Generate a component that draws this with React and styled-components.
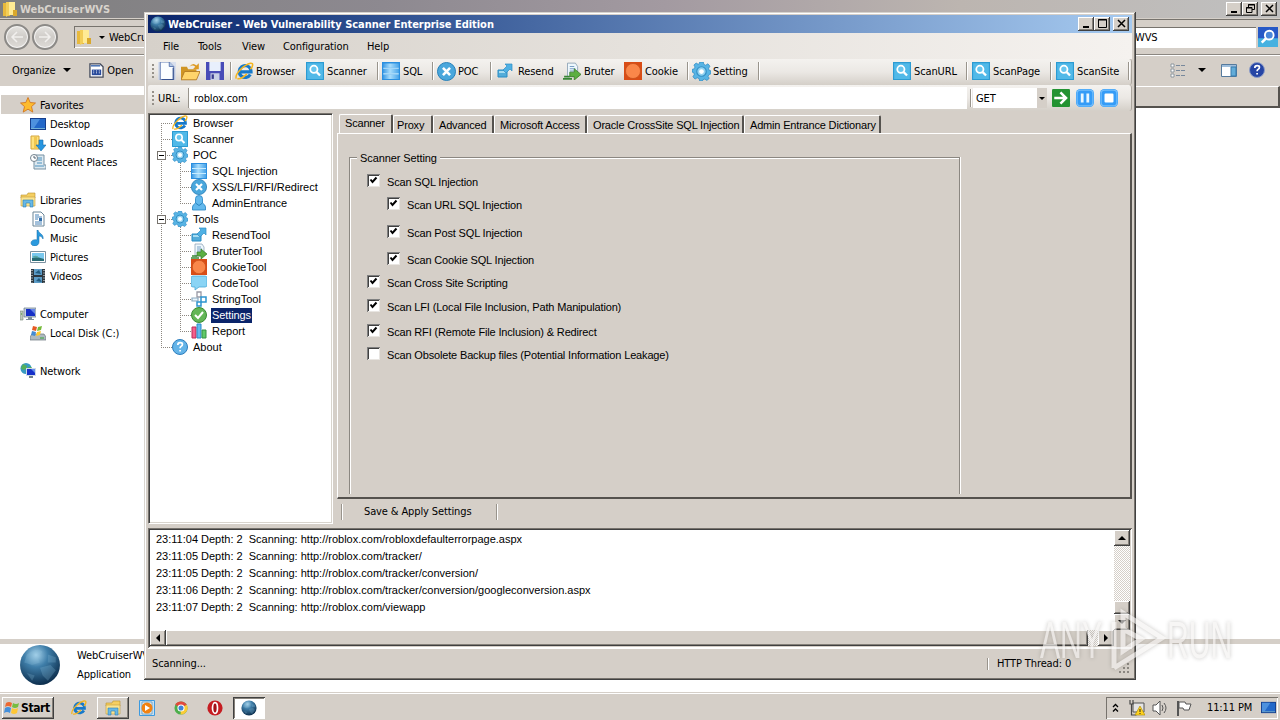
import styled, { createGlobalStyle, css } from 'styled-components'

const face = '#d5cfc8'
const tahoma = '"DejaVu Sans Condensed", "DejaVu Sans", sans-serif'
const sansSerif = '"Liberation Sans", Arial, sans-serif'

const GlobalStyle = createGlobalStyle`
  * { box-sizing: border-box; }
  body {
    margin: 0;
    overflow: hidden;
    color: #000;
    font-family: ${tahoma};
    font-size: 11px;
    letter-spacing: -0.12px;
  }
  svg { display: block; flex: none; }
`

const raised = css`
  background: ${face};
  box-shadow: inset -1px -1px #404040, inset 1px 1px #fff, inset -2px -2px #858079;
`
const sunken = css`
  box-shadow: inset 1px 1px #77736d, inset -1px -1px #fff;
`

const Desktop = styled.div`
  position: relative;
  width: 1280px;
  height: 720px;
  overflow: hidden;
  display: flex;
  flex-direction: column;
  background: #fff;
  white-space: nowrap;
`
const Spacer = styled.div`
  flex: ${p => p.$w ? `0 0 ${p.$w}px` : '1'};
`

/* ---- icons ---- */
const art = {
  folder: <><path d="M1 2h6l1 2v11H1z" fill="#e8b93c" /><path d="M4 1h9v13H4z" fill="#ffeb94" /><path d="M4 1h3v13l-3 2z" fill="#f3ce58" /><path d="M11 9h4v6h-4z" fill="#d9a82d" /></>,
  library: <><path d="M1 3h6l1-2h7v5H1z" fill="#f5cf62" stroke="#b99231" strokeWidth=".6" /><path d="M1 5h14v9H1z" fill="#fbe48f" stroke="#c49c3b" strokeWidth=".6" /><path d="M3 8h10v7h-3v-4H6v4H3z" fill="#67b8e6" stroke="#2d7db3" strokeWidth=".6" /></>,
  star: <path d="M8 .5l2.200 5 5.300.5-4 3.600 1.300 5.500L8 12.200 3.200 15.100l1.300-5.500-4-3.600 5.300-.5z" fill="#fdbb2e" stroke="#cf6d16" strokeWidth=".8" />,
  monitor: <><path d="M0 2h16v12H0z" fill="#163f8d" /><path d="M1 3h14v9H1z" fill="#2368c9" /><path d="M1 3h9L4 12H1z" fill="#4e91de" /><path d="M1 12h14v1H1z" fill="#71b1d7" /></>,
  download: <><path d="M1 1h8v13H1z" fill="#ffe27d" stroke="#d3a43c" /><path d="M4 2h3v12H4z" fill="#f1c750" /><path d="M9 5h4v5h3l-5 6-5-6h3z" fill="#2695e0" stroke="#176ba7" strokeWidth=".6" /></>,
  recent: <><path d="M4 1h10v10h2v4H4z" fill="#dce8ef" stroke="#7791a3" /><path d="M7 4h5M7 6h5M7 9h5M5 12h9" stroke="#4c91be" /><circle cx="4" cy="4" r="3.500" fill="#fff" stroke="#75848f" /><path d="M4 2v2h2" stroke="#506270" fill="none" /></>,
  document: <><path d="M3 1h8l3 3v11H3z" fill="#fff" stroke="#6a8698" /><path d="M5 4h4M5 6h7M5 8h3M5 11h7M5 13h7" stroke="#4682b8" /><path d="M9 7h3v3H9z" fill="#316daa" /></>,
  music: <path d="M8 0c1 4 6 4 5 9-1-2-2-3-4-3v6c0 5-8 5-8 1 0-3 4-4 6-3V0z" fill="#2b9ade" stroke="#126ba7" strokeWidth=".5" />,
  picture: <><path d="M.5 2.500h15v11H.5z" fill="#fff" stroke="#7b91a0" /><path d="M2 4h12v8H2z" fill="#79c8ee" /><path d="M2 9l5-1 7 2v2H2z" fill="#276c75" /><path d="M2 8q5-3 7 1" fill="#59a7a0" /></>,
  video: <><path d="M1 1h14v14H1z" fill="#2d3840" /><path d="M4 1h8v6H4zM4 9h8v6H4z" fill="#5c9cc7" /><path d="M5 5l4-3 2 4zM6 13l3-3 3 4z" fill="#225c80" /><path d="M2 2v13M14 2v13" stroke="#fff" strokeDasharray="1 1.500" /></>,
  computer: <><path d="M4 2h12v9H4z" fill="#c3d0dc" stroke="#627588" strokeWidth=".7" /><path d="M6 3h9v7H6z" fill="#162fc6" /><path d="M10 3h5v5z" fill="#6484e7" /><path d="M8 11h4v2h2v1H6v-1h2z" fill="#7b8d9c" /><path d="M0 5h3v9H0z" fill="#bec9bd" stroke="#778675" strokeWidth=".6" /><path d="M1 8h1" stroke="#3f972c" /></>,
  disk: <><path d="M2 9l12 0 2 3v3H0v-3z" fill="#aeb9c0" stroke="#68747b" strokeWidth=".7" /><path d="M10 13h4" stroke="#32a534" /><path d="M3 1l4 1-1 4-4-1z" fill="#e65a23" /><path d="M8 2l4-1-1 4-4 1z" fill="#75ba38" /><path d="M2 6l4 1-1 4-4-1z" fill="#438bd3" /><path d="M7 7l4-1-1 4-4 1z" fill="#ffc92d" /></>,
  network: <><circle cx="6" cy="5.500" r="5.500" fill="#399bc1" /><path d="M3 1l4 2-1 3-3 1-2-2zM8 4h4L9 8z" fill="#54b05a" /><path d="M6 5h10v8H6z" fill="#d0dbe6" /><path d="M7 6h8v6H7z" fill="#1630c9" /><path d="M11 6h4v4z" fill="#6590eb" /><path d="M9 13h4v2H9z" fill="#71818d" /></>,
  globe: <><circle cx="8" cy="8" r="7.600" fill="url(#earth)" /><path d="M3 4q4-3 6-1l-2 2 1 2-3 1-3-1zM8 9l4-1 2 2-3 4-2-2zM11 4l3 1v2h-3zM3 11l3 1-1 2z" fill="#8bbfdd" opacity=".25" /></>,
  ie: <><path d="M12.900 10.500a5 5 0 1 1 .2-4.600c.3.800.4 1.600.4 2.500H5" fill="none" stroke="#1679ca" strokeWidth="2.700" /><path d="M1 14C-.3 10 8 2 13 1c3-.4 2 3 0 5M2 14c3 1 6-2 8-4" fill="none" stroke="#f4b51f" strokeWidth="1.300" /></>,
  magnifier: <><path d="M0 0h16v16H0z" fill="#51b9e8" /><path d="M.5.500h15v15H.5z" fill="none" stroke="#2c9bd2" /><circle cx="7" cy="6.500" r="3.200" fill="#68c5ed" stroke="#fff" strokeWidth="1.600" /><path d="M9.500 9l3 3" stroke="#fff" strokeWidth="2" /></>,
  gear: <><path d="M6.500 0h3l.5 2 1.500.7L13.400 1.500l1.700 2-1.100 1.800.4 1.700 1.600.5v2.400l-1.700.7-.8 1.500 1 1.700-2 1.700-1.700-1.100-1.500.5L8.700 16H6.500L6 14l-1.600-.7-1.900 1.100-1.700-2 1.100-1.800L1.500 9 0 8.400V6.300l1.900-.6.6-1.500-.9-1.700L3.500.9l1.700 1L6 1.600z" fill="#58b4e4" stroke="#2c88c2" strokeWidth=".6" /><circle cx="8" cy="8" r="4" fill="#92d2f0" stroke="#328fc6" /><circle cx="8" cy="8" r="2" fill="#fff" /></>,
  database: <><path d="M0 0h16v16H0z" fill="#268cdc" /><path d="M0 1h16v4H0zM0 6h16v4H0zM0 11h16v4H0z" fill="url(#server)" /><path d="M1 5.500h14M1 10.500h14" stroke="#c8ecff" /><path d="M.5.500h15v15H.5z" fill="none" stroke="#2b8fe0" /></>,
  cross: <><circle cx="8" cy="8" r="7.600" fill="#4aa7dc" stroke="#267eb7" strokeWidth=".8" /><path d="M5 5l6 6M11 5l-6 6" stroke="#fff" strokeWidth="2.200" /></>,
  user: <><path d="M1.500 15v-3q0-2 3-4V3.500q0-3 3.500-3t3.500 3V8q3 2 3 4v3z" fill="#64b9ed" stroke="#2383c3" strokeWidth=".8" /><path d="M4.500 8l3.500 2.500L11.500 8" stroke="#2784c0" fill="none" /></>,
  resend: <><path d="M1 7h9v7H1z" fill="#54acd9" stroke="#278cc5" /><path d="M2 8h7v2H2z" fill="#a7dcf1" /><path d="M8 1h7v7l-2-2-4 4-3-3 4-4z" fill="#4fb1e4" stroke="#2f8dc4" strokeWidth=".7" /></>,
  bruter: <><path d="M4 1h7l2 3v9H4z" fill="#eef7fc" stroke="#829ab0" strokeWidth=".7" /><path d="M6 4h4M6 6h5M6 8h5" stroke="#7aa1c6" /><path d="M0 15h8M1 13h5" stroke="#378634" strokeWidth="1.500" /><path d="M6 9h4V6l6 5-6 5v-3H6z" fill="#5caf42" stroke="#387b28" strokeWidth=".7" /></>,
  cookie: <><path d="M0 0h16v16H0z" fill="#d94d16" /><circle cx="8" cy="8" r="6.700" fill="#fa874a" stroke="#c8521d" strokeWidth=".7" /></>,
  bubble: <path d="M2 1h12q2 0 2 2v7q0 2-2 2H8l-4 3v-3H2q-2 0-2-2V3q0-2 2-2z" fill="#8ad4f5" stroke="#49a8d6" strokeWidth=".8" />,
  string: <><path d="M6 1h4v5H6z" fill="#fff" stroke="#9999a5" strokeWidth="1.300" /><path d="M1 7h6v3H1z" fill="#e9f5fc" stroke="#8caac0" strokeWidth="1.200" /><path d="M10 6h5v5h-5zM6 11h4v4H6z" fill="#fff" stroke="#2c94cf" strokeWidth="1.500" /></>,
  ok: <><circle cx="8" cy="8" r="7.500" fill="#64b657" stroke="#388c32" /><path d="M4 8l3 3 5-6" fill="none" stroke="#fff" strokeWidth="2" /></>,
  report: <><path d="M1 4h4v11H1z" fill="#f3618c" stroke="#b92d5b" /><path d="M6 1h4v14H6z" fill="#61baf0" stroke="#288cc6" /><path d="M11 7h4v8h-4z" fill="#61c968" stroke="#369144" /></>,
  help: <><circle cx="8" cy="8" r="7.500" fill="#64b4e8" stroke="#2c7dbd" /><path d="M5.800 6.100q0-2.400 2.300-2.400c3.300 0 2.700 3 .8 3.900-.7.300-.8.800-.8 1.700M8.100 11v1.600" fill="none" stroke="#fff" strokeWidth="1.700" /></>,
  helpDark: <><circle cx="8" cy="8" r="7.500" fill="#2645a5" stroke="#8b9cc8" /><path d="M5.800 6.100q0-2.400 2.300-2.400c3.300 0 2.700 3 .8 3.900-.7.300-.8.800-.8 1.700M8.100 11v1.600" fill="none" stroke="#fff" strokeWidth="1.700" /></>,
  newFile: <><path d="M0 0h16v16H0z" fill="#c9d6ee" opacity=".6" /><path d="M2 0h8l4 4v12H2z" fill="#fafdff" stroke="#536faa" strokeWidth=".8" /><path d="M10 0v4h4" fill="#b4c9e6" stroke="#536faa" strokeWidth=".8" /><path d="M13.500 5v10.500H3" fill="none" stroke="#34508f" /></>,
  openFile: <><path d="M0 4h5l1 2h7v9H0z" fill="#d09524" /><path d="M3 8h13l-3 7H0z" fill="#ffd46b" stroke="#ae7521" strokeWidth=".7" /><path d="M7 4q3-4 6-1l2-2v5h-5l2-2q-2-2-5 0z" fill="#dd9a22" /></>,
  save: <><path d="M0 0h16v16H0z" fill="#484bb7" /><path d="M3 0h10v8H3z" fill="#e8effc" /><path d="M4 10h8v6H4z" fill="#c8cfe5" /><path d="M5 11h2v4H5z" fill="#373a8e" /></>,
  arrow: <><rect width="16" height="16" rx="1" fill="#239332" /><path d="M2 8h10M7.500 3l5 5-5 5" fill="none" stroke="#fff" strokeWidth="2.200" /></>,
  pause: <><rect width="16" height="16" rx="4" fill="#359cf7" /><rect x="1" y="1" width="14" height="14" rx="3" fill="none" stroke="#74bffc" /><path d="M5.500 4v8M10.500 4v8" stroke="#e9f7ff" strokeWidth="2.500" /></>,
  stop: <><rect width="16" height="16" rx="4" fill="#359cf7" /><rect x="1" y="1" width="14" height="14" rx="3" fill="none" stroke="#74bffc" /><rect x="4" y="4" width="8" height="8" rx="1" fill="#fff" /></>,
  openApp: <><path d="M1 1h11l3 3v11H1z" fill="#fff" stroke="#444b5c" strokeWidth="1.400" /><path d="M2 3h10" stroke="#3b67ad" strokeWidth="1.500" /><path d="M3 7h10v6H3z" fill="#284a9b" /><path d="M5 8v4M8 8v4M11 8v4" stroke="#fff" strokeDasharray="1 1" /></>,
  list: <><path d="M1 2h3v3H1zM1 7h3v3H1zM1 12h3v3H1z" fill="#fff" stroke="#78858f" strokeWidth=".8" /><path d="M6 3.500h9M6 8.500h9M6 13.500h9" stroke="#77889b" strokeDasharray="4 1" /></>,
  pane: <><path d="M.5 2.500h15v12H.5z" fill="#fff" stroke="#557a9d" /><path d="M1 3h14v2H1z" fill="#9ebedc" /><path d="M10 5h5v9h-5z" fill="#62acd8" stroke="#367bac" /></>,
  search: <><path d="M0 0h16v16H0z" fill="#2759c6" /><path d="M0 9h16v7H0z" fill="#45b1e0" /><circle cx="9" cy="6.500" r="3.500" fill="#4a87d9" stroke="#fff" strokeWidth="1.500" /><path d="M6.500 9L3 12.500" stroke="#fff" strokeWidth="2" /></>,
  windows: <><path d="M2 3q3-2 6 0L7 7Q4 5 1 7z" fill="#ed6932" /><path d="M9 3q3 2 6 0l-1 4q-3 2-6 0z" fill="#76bd40" /><path d="M1 8q3-2 6 0l-1 5q-3-2-6 0z" fill="#4590db" /><path d="M8 8q3 2 6 0l-1 5q-3 2-6 0z" fill="#ffc735" /></>,
  player: <><path d="M.5.500h15v15H.5z" fill="#c9e1f2" stroke="#3c9ae0" /><path d="M3 2h10v12H3z" fill="#eef5f8" stroke="#70a4c7" /><circle cx="8" cy="8" r="5.500" fill="#f28212" /><path d="M6 5l5 3-5 3z" fill="#fff" /></>,
  chrome: <><circle cx="8" cy="8" r="7.500" fill="#4dae4b" /><path d="M8 8L1.500 4.200A7.500 7.500 0 0 1 14.600 4.400z" fill="#e2493d" /><path d="M8 8l6.600-3.600A7.500 7.500 0 0 1 7.500 15.500z" fill="#fbcb36" /><circle cx="8" cy="8" r="3.500" fill="#3e83d8" stroke="#fff" strokeWidth="1.200" /></>,
  opera: <><circle cx="8" cy="8" r="7.600" fill="#c61d22" /><ellipse cx="8" cy="8" rx="2.500" ry="5.300" fill="#a41218" stroke="#fff" strokeWidth="1.700" /></>,
  lan: <><path d="M4 3h11v9H4z" fill="#e4e4e4" stroke="#525252" /><path d="M1 0v4h3V0M2.500 4v11h5" fill="none" stroke="#484848" strokeWidth="1.200" /><path d="M11 6l5 9H6z" fill="#ffd21e" stroke="#a78600" strokeWidth=".6" /><path d="M11 9v3M11 13v1" stroke="#222" /></>,
  speaker: <><path d="M1 5h3l4-4v14l-4-4H1z" fill="#fff" stroke="#555" /><path d="M10 5q2 3 0 6M12 3q4 5 0 10" fill="none" stroke="#555" /></>,
  flag: <><path d="M2 1v15" stroke="#555" strokeWidth="2" /><path d="M3 2h6l1 2h5l-2 6H8L7 8H3z" fill="#fff" stroke="#555" /></>,
}

const Icon = ({ name, size = 16 }) => (
  <svg width={size} height={size} viewBox="0 0 16 16">{art[name]}</svg>
)

const Defs = styled.svg`
  position: absolute;
`

const Caret = styled.i`
  width: 0;
  height: 0;
  border: ${p => p.$size || 4}px solid transparent;
  ${p => p.$dir === 'up' && 'border-bottom-color: #000; border-top: 0;'}
  ${p => p.$dir === 'left' && 'border-right-color: #000; border-left: 0;'}
  ${p => p.$dir === 'right' && 'border-left-color: #000; border-right: 0;'}
  ${p => !p.$dir && 'border-top-color: #000; border-bottom: 0;'}
`

/* ---- window caption ---- */
const Caption = styled.div`
  display: flex;
  align-items: center;
  flex: none;
  height: 18px;
  padding: 0 3px 1px 2px;
  gap: 2px;
  font-weight: bold;
  letter-spacing: ${p => p.$active ? '-0.03px' : '0'};
  color: ${p => p.$active ? '#fff' : '#d8d3cc'};
  background: ${p => p.$active
    ? 'linear-gradient(90deg, #0a246a, #1c3d80 12%, #a6caf0)'
    : 'linear-gradient(90deg, #7f7f7f, #8d8990 30%, #a39aa1 52%, #bcb5b0 75%, #c0c0c0)'};
`
const CaptionText = styled.div`
  flex: 1;
  padding-top: 1px;
`
const CaptionButton = styled.div`
  ${raised}
  width: 16px;
  height: 14px;
  margin-left: ${p => p.$gap || -2}px;
  display: flex;
  align-items: center;
  justify-content: center;
`
const glyphs = {
  min: <path d="M2 9h6" stroke="#000" strokeWidth="2" />,
  max: <path d="M1.500 1.500h8v8h-8zM1 2h9" fill="none" stroke="#000" />,
  restore: <path d="M3.500 5V1.500h6v5H7M3 2h7M1.500 4.500H7v5H1.500zM1 5h6" fill="none" stroke="#000" />,
  close: <path d="M2 2l7 7M9 2L2 9" stroke="#000" strokeWidth="1.500" />,
}
const Controls = ({ middle }) => (
  <>
    {['min', middle, 'close'].map((g, i) => (
      <CaptionButton key={g} $gap={i === 2 ? 1 : 0}>
        <svg width="11" height="11">{glyphs[g]}</svg>
      </CaptionButton>
    ))}
  </>
)

/* ---- explorer ---- */
const NavBar = styled.div`
  display: flex;
  align-items: center;
  height: 37px;
  flex: none;
  padding: 2px 2px 0 4px;
  background: ${face};
  border-bottom: 1px solid #8b8781;
  box-shadow: inset 0 1px ${face}, inset 0 2px #77736d;
`
const RoundButton = styled.div`
  width: 26px;
  height: 26px;
  margin-right: 2px;
  border-radius: 50%;
  border: 2px solid #8c8a87;
  background: linear-gradient(#e6e4e1, #cfccc8 50%, #dedbd7);
  box-shadow: inset 0 0 0 1px #f4f3f2;
  display: flex;
  align-items: center;
  justify-content: center;
`
const AddressField = styled.div`
  ${sunken}
  display: flex;
  align-items: center;
  height: 22px;
  width: 900px;
  margin-left: 14px;
  padding-left: 2px;
`
const SearchField = styled.div`
  ${sunken}
  flex: 1;
  height: 21px;
  margin-right: 2px;
  padding: 4px 0 0 161px;
  background: #fff;
`
const CommandBar = styled.div`
  display: flex;
  align-items: center;
  flex: none;
  height: 31px;
  padding: 0 15px 2px 12px;
  background: ${face};
  border-top: 1px solid #fff;
`
const Columns = styled.div`
  display: flex;
  height: 553px;
  flex: none;
`
const Sidebar = styled.div`
  width: 145px;
  padding-top: 9px;
`
const Place = styled.div`
  display: flex;
  align-items: center;
  gap: 4px;
  height: 19px;
  margin: 0 1px ${p => p.$gap ? 19 : 0}px;
  padding-left: ${p => p.$child ? 29 : 19}px;
  padding-top: 1px;
  background: ${p => p.$on ? face : 'transparent'};
`
const Content = styled.div`
  flex: 1;
`
const ContentHead = styled.div`
  height: 22px;
  background: ${face};
  border-top: 1px solid #fff;
  border-bottom: 2px solid #55524e;
  border-right: 2px solid #55524e;
`
const Details = styled.div`
  display: flex;
  align-items: flex-start;
  height: 53px;
  flex: none;
  border-top: 5px solid ${face};
`
const FileInfo = styled.div`
  padding: 3px 0 0 16px;
  line-height: 18.5px;
`

const places = [
  ['star', 'Favorites', 0, 0, 1],
  ['monitor', 'Desktop', 1],
  ['download', 'Downloads', 1],
  ['recent', 'Recent Places', 1, 1],
  ['library', 'Libraries'],
  ['document', 'Documents', 1],
  ['music', 'Music', 1],
  ['picture', 'Pictures', 1],
  ['video', 'Videos', 1, 1],
  ['computer', 'Computer'],
  ['disk', 'Local Disk (C:)', 1, 1],
  ['network', 'Network'],
]

const Explorer = () => (
  <>
    <Caption>
      <Icon name="folder" />
      <CaptionText>WebCruiserWVS</CaptionText>
      <Controls middle="restore" />
    </Caption>
    <NavBar>
      <RoundButton><svg width="14" height="14"><path d="M13 7H2M7 2L2 7l5 5" fill="none" stroke="#f1efed" strokeWidth="1.500" /></svg></RoundButton>
      <RoundButton><svg width="14" height="14"><path d="M1 7h11M7 2l5 5-5 5" fill="none" stroke="#f1efed" strokeWidth="1.500" /></svg></RoundButton>
      <AddressField>
        <Icon name="folder" />
        <Spacer $w={7} />
        <Caret $size={3} />
        <Spacer $w={4} />
        WebCruiserWVS
      </AddressField>
      <SearchField>WVS</SearchField>
      <Icon name="search" size={20} />
    </NavBar>
    <CommandBar>
      Organize
      <Spacer $w={8} />
      <Caret />
      <Spacer $w={18} />
      <Icon name="openApp" size={15} />
      <Spacer $w={3} />
      Open
      <Spacer />
      <Icon name="list" />
      <Spacer $w={12} />
      <Caret />
      <Spacer $w={15} />
      <Icon name="pane" />
      <Spacer $w={12} />
      <Icon name="helpDark" />
    </CommandBar>
    <Columns>
      <Sidebar>
        {places.map(([icon, label, child, gap, on]) => (
          <Place key={label} $child={child} $gap={gap} $on={on}>
            <Icon name={icon} />{label}
          </Place>
        ))}
      </Sidebar>
      <Content><ContentHead /></Content>
    </Columns>
    <Details>
      <Spacer $w={19} />
      <Icon name="globe" size={42} />
      <FileInfo>
        <div>WebCruiserWVS</div>
        <div>Application</div>
      </FileInfo>
    </Details>
  </>
)

/* ---- scanner window ---- */
const Window = styled.div`
  position: absolute;
  left: 144px;
  top: 12px;
  width: 992px;
  height: 668px;
  padding: 3px 4px 2px;
  display: flex;
  flex-direction: column;
  background: ${face};
  box-shadow: inset -1px -1px #404040, inset 1px 1px #d8d4ce, inset -2px -2px #77736d, inset 2px 2px #fff;
`
const MenuBar = styled.div`
  display: flex;
  align-items: center;
  height: 26px;
  flex: none;
  padding-left: 15px;
  background: linear-gradient(90deg, #d6d1ca, #f5f2ef);
`
const MenuItem = styled.div`
  width: ${p => p.$w}px;
`
const Strip = styled.div`
  display: flex;
  align-items: center;
  height: 26px;
  flex: none;
  padding-bottom: ${p => p.$lift || 0}px;
  border-radius: 2px 3px 3px 2px;
  border-right: 1px solid #aaa59d;
  background: linear-gradient(#f4f2ef, #ebe8e4 50%, #d4cfc8);
`
const Grip = styled.div`
  width: 10px;
  height: 17px;
  background: radial-gradient(circle at 5px 2px, #96918a 1px, transparent 1.3px) 0 0 / 10px 4px;
`
const Tool = styled.div`
  display: flex;
  align-items: center;
  width: ${p => p.$w}px;
`
const ToolIcon = styled.div`
  width: 21px;
  flex: none;
`
const Line = styled.div`
  width: ${p => p.$w || 5}px;
  height: ${p => p.$h || 18}px;
  border-left: 1px solid #99948c;
  box-shadow: inset 1px 0 #fff;
  flex: none;
`

const tools = [
  [23, 'newFile'], [25, 'openFile', '', 19], [24, 'save'], [5],
  [71, 'ie', 'Browser', 19], [71, 'magnifier', 'Scanner'], [5],
  [50, 'database', 'SQL'], [5], [53, 'cross', 'POC', 19], [7],
  [66, 'resend', 'Resend', 16], [61, 'bruter', 'Bruter'], [63, 'cookie', 'Cookie'], [5],
  [66, 'gear', 'Setting', 19], [5], null,
  [73, 'magnifier', 'ScanURL'], [6], [78, 'magnifier', 'ScanPage'], [6],
  [72, 'magnifier', 'ScanSite'], [3],
]

const UrlInput = styled.div`
  width: 777px;
  height: 22px;
  padding: 5px 4px;
  background: #fff;
`
const Method = styled.div`
  display: flex;
  justify-content: space-between;
  width: 74px;
  height: 20px;
  line-height: 22px;
  padding-left: 3px;
  background: #fff;
`
const MethodArrow = styled.div`
  display: flex;
  align-items: center;
  justify-content: center;
  width: 10px;
  background: ${face};
`
const Workspace = styled.div`
  display: flex;
  height: 411px;
  flex: none;
  margin-top: 2px;
`
const Tree = styled.div`
  width: 185px;
  padding: 1px 0 0 4px;
  background: #fff;
  border: 1px solid #fff;
  box-shadow: inset 1px 1px #404040, inset -1px -1px #d8d4cd;
  border-color: #77736d #fff #fff #77736d;
  font-family: ${sansSerif};
  letter-spacing: 0;
`
const Node = styled.div`
  display: flex;
  align-items: center;
  height: 16px;
`
const Guide = styled.div`
  display: flex;
  align-items: center;
  width: 19px;
  height: 16px;
  padding-left: 4px;
  background:
    repeating-linear-gradient(#8c8780 0 1px, transparent 1px 2px) 8px ${p => p.$part === 'first' ? 8 : 0}px / 1px ${p => p.$part === 'last' ? '8px' : '16px'} no-repeat,
    repeating-linear-gradient(90deg, #8c8780 0 1px, transparent 1px 2px) 8px 8px / ${p => p.$branch ? 11 : 0}px 1px no-repeat;
`
const Toggle = styled.div`
  width: 9px;
  height: 9px;
  border: 1px solid #77736d;
  background: linear-gradient(#000, #000) 1px 3px / 5px 1px no-repeat #fff;
`
const NodeText = styled.div`
  margin-left: 4px;
  padding: 1px 1px 2px;
  line-height: 12px;
  ${p => p.$selected && 'background: #0a246a; color: #fff; letter-spacing: -0.1px;'}
`

const nodes = [
  ['ie', 'Browser', 0, 'first'], ['magnifier', 'Scanner', 0], ['gear', 'POC', 0, 'open'],
  ['database', 'SQL Injection', 1], ['cross', 'XSS/LFI/RFI/Redirect', 1], ['user', 'AdminEntrance', 1, 'last'],
  ['gear', 'Tools', 0, 'open'], ['resend', 'ResendTool', 1], ['bruter', 'BruterTool', 1],
  ['cookie', 'CookieTool', 1], ['bubble', 'CodeTool', 1], ['string', 'StringTool', 1],
  ['ok', 'Settings', 1], ['report', 'Report', 1, 'last'], ['help', 'About', 0, 'last'],
]

const Main = styled.div`
  flex: 1;
  display: flex;
  flex-direction: column;
  margin-left: 4px;
`
const Tabs = styled.div`
  display: flex;
  align-items: flex-end;
  height: 20px;
  padding-left: 2px;
  font-family: ${sansSerif};
  letter-spacing: -0.18px;
`
const Tab = styled.div`
  width: ${p => p.$w}px;
  height: ${p => p.$active ? 20 : 18}px;
  margin-bottom: ${p => p.$active ? -1 : 0}px;
  padding: ${p => p.$active ? 2 : 3}px 0 0 ${p => p.$pad || 5}px;
  border-top: 1px solid #fff;
  border-left: 1px solid #fff;
  border-right: 2px solid #55524e;
  border-radius: 2px 2px 0 0;
  background: ${face};
`
const Page = styled.div`
  height: 366px;
  padding: 23px 0 3px 11px;
  border: 1px solid #fff;
  border-right: 2px solid #55524e;
  border-bottom: 2px solid #55524e;
`
const Group = styled.div`
  width: 611px;
  height: 337px;
  border: 1px solid #8b8781;
  border-bottom: 0;
  box-shadow: inset 1px 1px #fff, 1px 0 #fff;
  font-family: ${sansSerif};
  letter-spacing: -0.16px;
`
const Legend = styled.div`
  width: 83px;
  height: 15px;
  margin: -8px 0 3px 7px;
  padding: 2px 0 0 3px;
  letter-spacing: -0.1px;
  background: ${face};
`
const Option = styled.label`
  display: flex;
  align-items: center;
  gap: 7px;
  height: 16px;
  margin-top: ${p => p.$top}px;
  padding-left: ${p => p.$child ? 37 : 17}px;
`
const Box = styled.span`
  display: block;
  width: 13px;
  height: 13px;
  padding: 1px;
  margin-top: -3px;
  background: #fff;
  box-shadow: inset 1px 1px #808080, inset -1px -1px #e8e5e1, inset 2px 2px #404040;
`
const options = [
  ['Scan SQL Injection', 9, 0, 1],
  ['Scan URL SQL Injection', 7, 1, 1],
  ['Scan Post SQL Injection', 12, 1, 1],
  ['Scan Cookie SQL Injection', 11, 1, 1],
  ['Scan Cross Site Scripting', 7, 0, 1],
  ['Scan LFI (Local File Inclusion, Path Manipulation)', 8, 0, 1],
  ['Scan RFI (Remote File Inclusion) & Redirect', 9, 0, 1],
  ['Scan Obsolete Backup files (Potential Information Leakage)', 7, 0, 0],
]
const Actions = styled.div`
  display: flex;
  align-items: center;
  flex: 1;
  padding-left: 4px;
`
const Log = styled.div`
  display: flex;
  flex-direction: column;
  height: 120px;
  flex: none;
  margin-top: 4px;
  padding: 2px;
  background: #fff;
  box-shadow: inset 1px 1px #77736d, inset -1px -1px #fff, inset 2px 2px #404040, inset -2px -2px ${face};
`
const LogBody = styled.div`
  display: flex;
  height: 101px;
`
const Lines = styled.div`
  flex: 1;
  padding: 1px 0 0 6px;
  font-family: ${sansSerif};
  line-height: 17px;
  letter-spacing: 0;
  white-space: pre;
`
const VScroll = styled.div`
  display: flex;
  flex-direction: column;
  width: 16px;
  background: repeating-conic-gradient(#fff 0 25%, ${face} 0 50%) 0 0 / 2px 2px;
`
const HScroll = styled.div`
  display: flex;
  height: 16px;
  background: repeating-conic-gradient(#fff 0 25%, ${face} 0 50%) 0 0 / 2px 2px;
`
const Thumb = styled.div`
  ${raised}
  display: flex;
  align-items: center;
  justify-content: center;
  flex: none;
  width: ${p => p.$w || 16}px;
  height: ${p => p.$h || 16}px;
`
const Corner = styled.div`
  width: 16px;
  background: ${face};
`
const Status = styled.div`
  display: flex;
  align-items: center;
  flex: 1;
  padding: 0 1px 0 4px;
  border-top: 1px solid #fff;
`
const SizeGrip = styled.svg`
  align-self: flex-end;
  margin-bottom: 3px;
`

const log = [
  '23:11:04 Depth: 2  Scanning: http://roblox.com/robloxdefaulterrorpage.aspx',
  '23:11:05 Depth: 2  Scanning: http://roblox.com/tracker/',
  '23:11:05 Depth: 2  Scanning: http://roblox.com/tracker/conversion/',
  '23:11:06 Depth: 2  Scanning: http://roblox.com/tracker/conversion/googleconversion.aspx',
  '23:11:07 Depth: 2  Scanning: http://roblox.com/viewapp',
]

const Scanner = () => (
  <Window>
    <Caption $active>
      <Icon name="globe" />
      <CaptionText>WebCruiser - Web Vulnerability Scanner Enterprise Edition</CaptionText>
      <Controls middle="max" />
    </Caption>
    <MenuBar>
      <MenuItem $w={35}>File</MenuItem>
      <MenuItem $w={44}>Tools</MenuItem>
      <MenuItem $w={41}>View</MenuItem>
      <MenuItem $w={84}>Configuration</MenuItem>
      <MenuItem>Help</MenuItem>
    </MenuBar>
    <Strip $lift={2}>
      <Grip />
      {tools.map((t, i) => {
        if (!t) return <Spacer key={i} />
        const [w, icon, label, size = 18] = t
        if (!icon) return <Line key={i} $w={w} />
        return (
          <Tool key={i} $w={w}>
            <ToolIcon><Icon name={icon} size={size} /></ToolIcon>{label}
          </Tool>
        )
      })}
    </Strip>
    <Strip>
      <Grip />
      <Tool $w={30}>URL:</Tool>
      <Line $w={2} $h={20} />
      <UrlInput>roblox.com</UrlInput>
      <Spacer $w={3} />
      <Line $w={3} />
      <Method>GET<MethodArrow><Caret $size={3} /></MethodArrow></Method>
      <Spacer $w={5} />
      <Tool $w={24}><Icon name="arrow" size={18} /></Tool>
      <Tool $w={24}><Icon name="pause" size={18} /></Tool>
      <Tool $w={24}><Icon name="stop" size={18} /></Tool>
    </Strip>
    <Workspace>
      <Tree>
        {nodes.map(([icon, label, child, part]) => (
          <Node key={label}>
            <Guide $part={child ? '' : part} $branch={!child}>
              {part === 'open' && <Toggle />}
            </Guide>
            {child === 1 && <Guide $part={part} $branch />}
            <Icon name={icon} />
            <NodeText $selected={label === 'Settings'}>{label}</NodeText>
          </Node>
        ))}
      </Tree>
      <Main>
        <Tabs>
          <Tab $w={54} $active>Scanner</Tab>
          <Tab $w={40} $pad={3}>Proxy</Tab>
          <Tab $w={61}>Advanced</Tab>
          <Tab $w={93}>Microsoft Access</Tab>
          <Tab $w={157}>Oracle CrossSite SQL Injection</Tab>
          <Tab $w={137}>Admin Entrance Dictionary</Tab>
        </Tabs>
        <Page>
          <Group>
            <Legend>Scanner Setting</Legend>
            {options.map(([label, top, child, checked]) => (
              <Option key={label} $top={top} $child={child}>
                <Box>
                  {checked === 1 && <svg width="11" height="11"><path d="M2.500 4.500l2 2.500 4-4.500" fill="none" stroke="#000" strokeWidth="2" /></svg>}
                </Box>
                {label}
              </Option>
            ))}
          </Group>
        </Page>
        <Actions>
          <Line $w={23} $h={16} />
          <Tool $w={132}>Save &amp; Apply Settings</Tool>
          <Line $h={16} />
        </Actions>
      </Main>
    </Workspace>
    <Log>
      <LogBody>
        <Lines>{log.map(l => <div key={l}>{l}</div>)}</Lines>
        <VScroll>
          <Thumb><Caret $dir="up" /></Thumb>
          <Spacer />
          <Thumb $h={13} />
          <Thumb><Caret /></Thumb>
        </VScroll>
      </LogBody>
      <HScroll>
        <Thumb><Caret $dir="left" /></Thumb>
        <Thumb $w={922} />
        <Spacer />
        <Thumb><Caret $dir="right" /></Thumb>
        <Corner />
      </HScroll>
    </Log>
    <Status>
      Scanning...
      <Spacer />
      <Line $w={10} $h={12} />
      <Tool $w={121}>HTTP Thread: 0</Tool>
      <SizeGrip width="13" height="13">
        <path d="M9 1h2v2H9zM5 5h2v2H5zM9 5h2v2H9zM1 9h2v2H1zM5 9h2v2H5zM9 9h2v2H9z" fill="#8b8781" />
      </SizeGrip>
    </Status>
  </Window>
)

/* ---- taskbar ---- */
const TaskBar = styled.div`
  display: flex;
  align-items: center;
  height: 28px;
  flex: none;
  padding: 2px 2px 0;
  background: ${face};
  border-top: 1px solid #d5cfc8;
  box-shadow: inset 0 1px #fff;
`
const StartButton = styled.div`
  ${raised}
  display: flex;
  align-items: center;
  gap: 1px;
  width: 52px;
  height: 22px;
  padding-left: 2px;
  margin-right: 9px;
  font-weight: bold;
  font-size: 12px;
  letter-spacing: -0.4px;
`
const Task = styled.div`
  display: flex;
  align-items: center;
  justify-content: center;
  width: 32px;
  height: 22px;
  margin-right: 2px;
  ${p => p.$open && raised}
  ${p => p.$active && 'background: #fff; box-shadow: inset 1px 1px #404040, inset -1px -1px #fff, inset 2px 2px #858079;'}
`
const Tray = styled.div`
  ${sunken}
  display: flex;
  align-items: center;
  width: 172px;
  height: 22px;
  padding-left: 6px;
`
const Clock = styled.div`
  width: 54px;
`

const Taskbar = () => (
  <TaskBar>
    <StartButton><Icon name="windows" />Start</StartButton>
    <Task><Icon name="ie" /></Task>
    <Task $open><Icon name="library" /></Task>
    <Task><Icon name="player" /></Task>
    <Task><Icon name="chrome" size={14} /></Task>
    <Task><Icon name="opera" /></Task>
    <Task $active><Icon name="globe" /></Task>
    <Spacer />
    <Tray>
      <svg width="7" height="10"><path d="M1 4l2.500-2.500L6 4M1 8.500L3.500 6 6 8.500" fill="none" stroke="#000" strokeWidth="1.300" /></svg>
      <Spacer $w={10} />
      <Icon name="lan" />
      <Spacer $w={7} />
      <Icon name="speaker" />
      <Spacer $w={8} />
      <Icon name="flag" />
      <Spacer $w={15} />
      <Clock>11:11 PM</Clock>
      <Icon name="monitor" size={15} />
    </Tray>
  </TaskBar>
)

const Watermark = styled.div`
  position: absolute;
  left: 1040px;
  top: 608px;
  width: 196px;
  height: 64px;
  display: flex;
  align-items: center;
  opacity: 0.65;
  filter: drop-shadow(0 0 2px rgba(90, 86, 80, 0.5));
`
const Word = styled.span`
  width: ${p => p.$w}px;
  font-family: ${sansSerif};
  font-size: 52px;
  line-height: 66px;
  letter-spacing: 0;
  color: #f4f2f0;
  transform: scaleX(0.58);
  transform-origin: left;
`

const App = () => (
  <Desktop>
    <GlobalStyle />
    <Defs width="0" height="0">
      <defs>
        <radialGradient id="earth" cx=".4" cy=".25" r=".75">
          <stop offset="0" stopColor="#a8d4ec" />
          <stop offset=".4" stopColor="#3f7ea9" />
          <stop offset="1" stopColor="#0d2f4e" />
        </radialGradient>
        <linearGradient id="server">
          <stop offset="0" stopColor="#2c90e2" />
          <stop offset=".45" stopColor="#a8dcfb" />
          <stop offset="1" stopColor="#3c9de8" />
        </linearGradient>
      </defs>
    </Defs>
    <Explorer />
    <Taskbar />
    <Scanner />
    <Watermark>
      <Word $w={69}>ANY</Word>
      <svg width="58" height="64" viewBox="0 0 58 64">
        <path d="M5 60V14M5 60l48-30L14 5v38l18-12-18-10" fill="none" stroke="#f4f2f0" strokeWidth="5" />
      </svg>
      <Word $w={64}>RUN</Word>
    </Watermark>
  </Desktop>
)

export default App
